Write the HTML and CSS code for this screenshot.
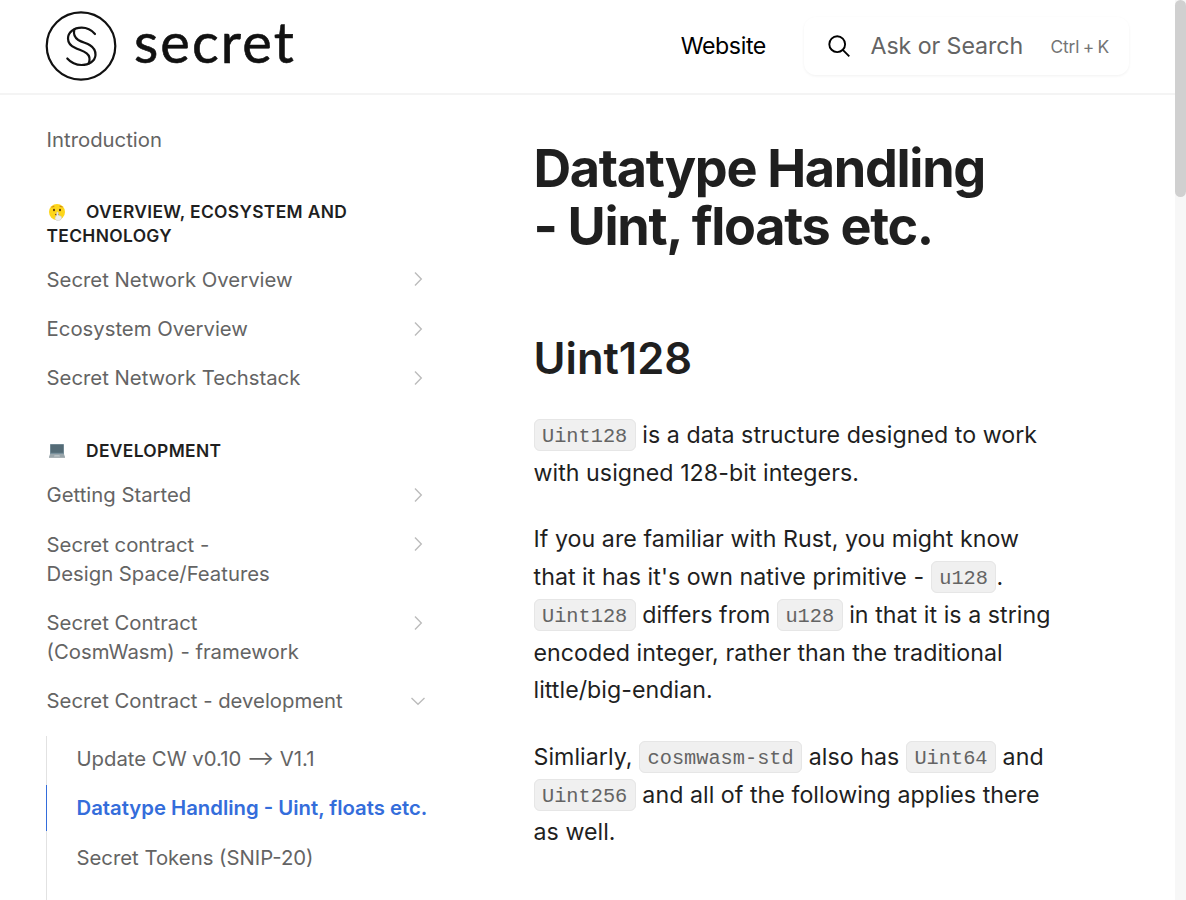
FILE: index.html
```html
<!DOCTYPE html>
<html lang="en">
<head>
<meta charset="utf-8">
<title>Datatype Handling - Uint, floats etc.</title>
<link rel="stylesheet" href="styles.css">
</head>
<body>
<div class="page">
  <header class="header">
    <a class="brand">
      <svg class="brand-mark" viewBox="0 0 72 72" fill="none" stroke="#111" stroke-linecap="round">
        <ellipse cx="36" cy="36" rx="34.3" ry="33.6" stroke-width="2.2"/>
        <path d="M50 24C46 19.500 41.500 17.700 36.700 17.700C28.500 17.700 23 22.500 23 28.500C23 33.500 26 36 30 37.800C34 39.800 38.500 41 41.700 43.300C45.200 46 45 50 43.800 53.500" stroke-width="2.200"/>
        <path d="M29.300 19.500C28.300 24 29.500 27.500 33.300 30C37.500 32.600 41.500 33 45 35.200C49 37.700 50.700 41 50.500 45C50.200 51 44 55 36.500 55C31 55 26 52.700 22.300 48.500" stroke-width="2.200"/>
      </svg>
      <span class="brand-name">secret</span>
    </a>
    <a class="top-link">Website</a>
    <div class="search">
      <svg class="search-icon" viewBox="0 0 24 24" fill="none" stroke="#000" stroke-width="1.9"><circle cx="10.200" cy="10.200" r="7.900"/><path d="M15.800 15.800L22.300 22.300"/></svg>
      <span class="search-label">Ask or Search</span>
      <span class="search-key">Ctrl + K</span>
    </div>
  </header>
  <div class="body">
    <nav class="sidebar">
      <a class="item">Introduction</a>
      <h5 class="group"><svg class="emoji" viewBox="0 0 18 18"><circle cx="9" cy="9" r="8" fill="#fdd61b"/><path d="M3.500 4.200l2.800-.8M11.500 3.200l3 .8" stroke="#c67a16" stroke-width=".9"/><ellipse cx="6" cy="7" rx="1" ry="1.300" fill="#59370f"/><ellipse cx="12" cy="7" rx="1" ry="1.300" fill="#59370f"/><path d="M7 11.500h4" stroke="#8a4b12" stroke-width="1.200"/><path d="M8.800 9.200q1-.7 1.400.3l.2 2.700 2.600 1q1 .5.500 2-.6 2.300-3.200 2.500-2.600 0-3.300-2-.4-2 1.600-3z" fill="#eee" stroke="#c9c6bd" stroke-width=".5"/></svg>Overview, Ecosystem and Technology</h5>
      <a class="item"><span>Secret Network Overview</span><svg class="chevron" viewBox="0 0 16 16"><path d="M5 1.500L11.300 8L5 14.500"/></svg></a>
      <a class="item"><span>Ecosystem Overview</span><svg class="chevron" viewBox="0 0 16 16"><path d="M5 1.500L11.300 8L5 14.500"/></svg></a>
      <a class="item"><span>Secret Network Techstack</span><svg class="chevron" viewBox="0 0 16 16"><path d="M5 1.500L11.300 8L5 14.500"/></svg></a>
      <h5 class="group second"><svg class="emoji" viewBox="0 0 18 18"><rect x="2" y="2" width="14" height="10" rx=".6" fill="#78909c"/><rect x="2.800" y="2.800" width="12.400" height="8" fill="#546b76"/><path d="M2 12h14l1 3H1z" fill="#9aa6ab"/><path d="M6.500 13.200h5l.5 1.300H6z" fill="#c1c9cc"/><rect x="1" y="15" width="16" height="1" fill="#aab2b6"/></svg>Development</h5>
      <a class="item"><span>Getting Started</span><svg class="chevron" viewBox="0 0 16 16"><path d="M5 1.500L11.300 8L5 14.500"/></svg></a>
      <a class="item"><span>Secret contract -<br>Design Space/Features</span><svg class="chevron" viewBox="0 0 16 16"><path d="M5 1.500L11.300 8L5 14.500"/></svg></a>
      <a class="item"><span>Secret Contract<br>(CosmWasm) - framework</span><svg class="chevron" viewBox="0 0 16 16"><path d="M5 1.500L11.300 8L5 14.500"/></svg></a>
      <a class="item"><span>Secret Contract - development</span><svg class="chevron" viewBox="0 0 16 16"><path d="M1.500 5L8 11.300L14.500 5"/></svg></a>
      <div class="subtree">
        <a class="subitem">Update CW v0.10 --&gt; V1.1</a>
        <a class="subitem active">Datatype Handling - Uint, floats etc.</a>
        <a class="subitem">Secret Tokens (SNIP-20)</a>
        <a class="subitem"></a>
      </div>
    </nav>
    <main class="content">
      <h1>Datatype Handling - Uint, floats etc.</h1>
      <h2>Uint128</h2>
      <p><code>Uint128</code> is a data structure designed to work with usigned 128-bit integers.</p>
      <p>If you are familiar with Rust, you might know that it has it's own native primitive - <code>u128</code>. <code>Uint128</code> differs from <code>u128</code> in that it is a string encoded integer, rather than the traditional little/big-endian.</p>
      <p>Simliarly, <code>cosmwasm-std</code> also has <code>Uint64</code> and <code>Uint256</code> and all of the following applies there as well.</p>
    </main>
  </div>
</div>
<div class="scrollbar"><div class="thumb"></div></div>
</body>
</html>
```
FILE: styles.css
```css
html { font-size: 23.2px; }
* { box-sizing: border-box; }
body {
  margin: 0;
  height: 900px;
  display: flex;
  overflow: hidden;
  background: #fff;
  color: #1f1f1f;
  font-family: Inter, "Noto Sans", sans-serif;
}
.page { flex: 1; height: 900px; overflow: hidden; }
.scrollbar { width: 11px; background: #f7f7f7; }
.thumb { height: 197px; background: #d0d0d0; border-radius: 5.5px; }

.header {
  height: 95px;
  display: flex;
  align-items: center;
  padding: 0 46px 2px 45px;
  border-bottom: 2px solid #f4f4f4;
}
.brand { display: flex; align-items: center; }
.brand-mark { width: 72px; height: 72px; }
.brand-name {
  font: 400 56px/72px Lato, sans-serif;
  color: #111;
  -webkit-text-stroke: 0.6px #111;
  margin: -8px 0 0 17px;
  letter-spacing: 2.1px;
}
.top-link { margin-left: auto; padding-top: 1px; font-size: 1rem; line-height: 1.5; letter-spacing: -0.4px; color: #000; }
.search {
  display: flex;
  align-items: center;
  width: 325px;
  height: 58px;
  margin-left: 38px;
  padding: 0 20px 0 23px;
  border-radius: 12px;
  box-shadow: 0 1px 3px rgba(0, 0, 0, .06);
}
.search-icon { width: 24px; height: 24px; }
.search-label { margin-left: 19.500px; font-size: 1rem; letter-spacing: -0.08px; color: #646464; }
.search-key { margin-left: auto; padding-top: 1px; font-size: 17.4px; letter-spacing: -0.1px; word-spacing: -1.500px; color: #747474; }

.body { display: flex; }
.sidebar { width: 384px; margin-left: 46px; padding-top: 20px; }
.item {
  display: flex;
  justify-content: space-between;
  padding: 10px 4px 10.300px 0.600px;
  font-size: 0.875rem;
  line-height: 29px;
  color: #646464;
}
.chevron {
  width: 16px;
  height: 16px;
  margin: 6.500px 0 0;
  fill: none;
  stroke: #bcbcbc;
  stroke-width: 1.400;
}
.group {
  margin: 36px 0 6.500px 0.500px;
  font-size: 17.4px;
  line-height: 24px;
  font-weight: 600;
  letter-spacing: 0.35px;
  text-transform: uppercase;
}
.group.second { margin: 36.500px 0 7.300px 0.500px; }
.emoji { width: 18px; height: 18px; margin: 0 20.500px 0 1px; vertical-align: -3px; }
.subtree { margin-top: 10.300px; border-left: 1px solid #e2e2e2; }
.subitem {
  display: block;
  height: 46px;
  margin: 0 0 3.500px -1px;
  padding-left: 29.500px;
  border-left: 1px solid transparent;
  font-size: 0.875rem;
  line-height: 46px;
  color: #646464;
  white-space: nowrap;
}
.subitem.active { color: #346ddb; border-color: #346ddb; font-weight: 600; }

.content { width: 526px; margin-left: 103.500px; padding-top: 44px; }
h1 {
  width: 475px;
  margin: 0;
  font-size: 2.25rem;
  line-height: 58px;
  font-weight: 700;
  letter-spacing: -0.0255em;
}
h2 { margin: 73px 0 0; font-size: 1.875rem; line-height: 60px; font-weight: 600; }
p { margin: 29px 0; font-size: 1rem; line-height: 37.7px; letter-spacing: 0.04px; }
code {
  padding: 5px 7.500px 2px;
  border: 1px solid #e6e6e6;
  border-radius: 6px;
  background: #f0f0f0;
  color: #646464;
  font-family: "Liberation Mono", monospace;
  font-size: 0.875rem;
  letter-spacing: 0;
  line-height: 1;
  vertical-align: 1px;
}
```
